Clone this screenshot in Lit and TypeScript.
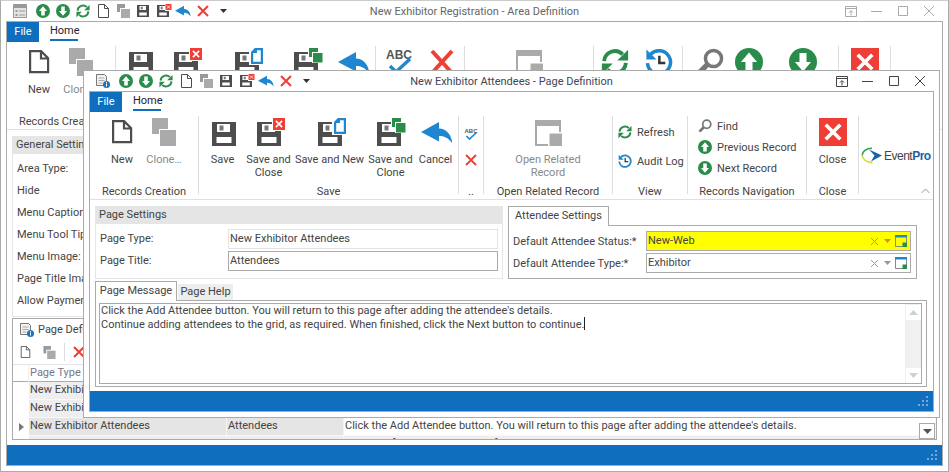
import { LitElement, html, css, svg } from "lit";
import { customElement } from "lit/decorators.js";

const GREEN = "#2a8c4a";
const BLUE = "#1f87cf";
const RED = "#ef3e36";
const DARK = "#4d4d4d";
const GREY = "#aaa";

// shapes drawn in a 16 unit box
const arrowDisc = (up: boolean) => svg`
  <circle cx="8" cy="8" r="8" fill=${GREEN}></circle>
  <path fill="#fff" d=${up ? "M8 2.6 12.6 8H10v5.2H6V8H3.4z" : "M8 13.4 12.6 8H10V2.8H6V8H3.4z"}></path>`;

const refresh = svg`
  <g fill="none" stroke=${GREEN} stroke-width="2.2">
    <path d="M1.8 7.5A6.2 6.2 0 0 1 12.4 3.6"></path>
    <path d="M14.2 8.5A6.2 6.2 0 0 1 3.6 12.4"></path>
  </g>
  <path fill=${GREEN} d="M15.5 1v6.2H9.3zM.5 15V8.8h6.2z"></path>`;

const audit = svg`
  <path fill="none" stroke=${BLUE} stroke-width="2" d="M3.2 3.6A6.6 6.6 0 1 1 1.4 8.6"></path>
  <path fill=${BLUE} d="M.8.8v5.8h5.8z"></path>
  <path fill="none" stroke="#333" stroke-width="1.4" d="M8.2 4.4v4.2h3.4"></path>`;

const find = svg`
  <circle cx="10" cy="6" r="4.6" fill="none" stroke="#777" stroke-width="2"></circle>
  <path stroke="#777" stroke-width="3" d="M6.6 9.4 1.6 14.4"></path>`;

const logoMark = svg`
  <path fill="#1b5fa8" d="M8 2.5 21 8.5 10 14.5 13.5 8.5z"></path>
  <path fill="none" stroke="#2f9e58" stroke-width="1.6" d="M11 1.2C5 1.2 1.2 4.6 1.2 8.2"></path>
  <path fill="none" stroke="#d9d92e" stroke-width="1.6" d="M1.2 8.2C1.6 12.4 5.6 15.4 11.5 15.6"></path>`;

const floppy = (x: number) => svg`
  <g transform="translate(${x} 6)">
    <path fill=${DARK} d="M0 0h24v24H0z"></path>
    <path fill="#fff" d="M5 2h13v8H5zM4.5 15h15v6h-15z"></path>
    <path fill="#777" d="M7.5 3.500h4v5h-4z"></path>
  </g>`;

const clonePair = (x: number, y: number, s: number, c: string) => svg`
  <rect x=${x} y=${y} width=${s} height=${s} fill=${c}></rect>
  <rect x=${x + s / 2 - 1} y=${y + s * 0.75 - 1} width=${s + 1} height=${s + 1} fill="#fff"></rect>
  <rect x=${x + s / 2} y=${y + s * 0.75} width=${s} height=${s} fill=${c}></rect>`;

const redBox = (x: number, y: number, s: number) => svg`
  <rect x=${x} y=${y} width=${s} height=${s} fill=${RED}></rect>
  <path fill="none" stroke="#fff" stroke-width=${s * 0.13}
    d="M${x + s * 0.24} ${y + s * 0.24}L${x + s * 0.76} ${y + s * 0.76}M${x + s * 0.76} ${y + s * 0.24}L${x + s * 0.24} ${y + s * 0.76}"></path>`;

const blueDoc = svg`
  <path fill="#fff" d="M18 0h15v19H18z"></path>
  <path fill="#fff" stroke=${BLUE} stroke-width="2.200" d="M24.500 3.100h6.400v13.800H21.100V6.500z"></path>
  <path fill=${BLUE} d="M20 7h6V2h-2z"></path>`;

// the 32 unit ribbon pictures
const bigIcons: Record<string, unknown> = {
  new: svg`<path fill="#fff" stroke=${DARK} stroke-width="2.2" d="M7.100 5.100h11l7 7v14h-18zM18 5.100v7.400h7.200"></path>`,
  clone: clonePair(4, 2, 16, GREY),
  save: floppy(5),
  saveClose: svg`${floppy(4)}<rect x="19" y="1" width="14" height="14" fill="#fff"></rect>${redBox(20, 2, 12)}`,
  saveNew: svg`${floppy(4)}${blueDoc}`,
  saveClone: svg`${floppy(2)}
    <rect x="16" y="1" width="11" height="11" fill="#fff"></rect>
    <rect x="17" y="2" width="9" height="9" fill=${GREEN}></rect>
    <rect x="20" y="6" width="11" height="11" fill="#fff"></rect>
    <rect x="21" y="7" width="9.5" height="9.5" fill=${GREEN}></rect>`,
  cancel: svg`<path fill=${BLUE} d="M1 16 19 6v6.4C27 12.6 31.4 19 32.4 27.4 28 21.6 24 20 19 20v5.6z"></path>`,
  spell: svg`
    <text x="16" y="13" text-anchor="middle" font-family="Liberation Sans" font-weight="700" font-size="12" fill="#555">ABC</text>
    <path fill="none" stroke=${BLUE} stroke-width="3.4" d="M7 20l6 6L27 13"></path>`,
  cross: svg`<path fill="none" stroke=${RED} stroke-width="4" d="M6 5l20 22M26 5 6 27"></path>`,
  related: svg`
    <path fill="none" stroke=${GREY} stroke-width="2" d="M4 5h24v24H4z"></path>
    <path fill=${GREY} d="M3 4h26v6H3z"></path>
    <path fill="#fff" d="M16 16h15v15H16z"></path>
    <path fill=${GREY} d="M17.5 17.5H30V30H17.5z"></path>`,
  close: redBox(2, 2, 28),
  refresh: svg`<g transform="translate(2 2) scale(1.75)">${refresh}</g>`,
  audit: svg`<g transform="translate(2 2) scale(1.75)">${audit}</g>`,
  find: svg`<g transform="translate(2 2) scale(1.75)">${find}</g>`,
  up: svg`<g transform="translate(2 2) scale(1.75)">${arrowDisc(true)}</g>`,
  down: svg`<g transform="translate(2 2) scale(1.75)">${arrowDisc(false)}</g>`,
};

const big = (name: string) =>
  html`<svg class="big" width="32" height="32" viewBox="0 0 32 32">${bigIcons[name]}</svg>`;

const small16 = (shape: unknown, size = 14) =>
  html`<svg width=${size} height=${size} viewBox="0 0 16 16">${shape}</svg>`;

const lookup = html`<svg width="12" height="12" viewBox="0 0 12 12">
  <path fill="none" stroke="#888" d="M.5.5h11v11H.5z"></path>
  <path fill=${BLUE} d="M0 0h12v2.500H0z"></path>
  <path fill=${GREEN} d="M7.500 7.500H12V12H7.500z"></path>
</svg>`;

const grip = html`<svg class="grip" width="12" height="12" viewBox="0 0 12 12" fill="#7ea6d2">
  <path d="M9 1h2v2H9zM5 5h2v2H5zM9 5h2v2H9zM1 9h2v2H1zM5 9h2v2H5zM9 9h2v2H9z"></path>
</svg>`;

const quickIcons = html`
  <div class="qat">
    ${small16(arrowDisc(true))}${small16(arrowDisc(false))}${small16(refresh)}
    <svg class="q-new" width="11" height="14" viewBox="0 0 11 14">
      <path fill="#fff" stroke=${DARK} d="M.5.5h6l4 4v9H.5zM6.5.5v4h4"></path>
    </svg>
    <svg class="q-clone" width="13" height="14" viewBox="0 0 13 14">
      <path fill="#999" d="M0 0h8v8H0z"></path><path fill="#fff" d="M3 4h10v10H3z"></path><path fill=${GREY} d="M4 5h9v9H4z"></path>
    </svg>
    <svg class="q-save" width="12" height="12" viewBox="0 6 24 24">${floppy(0)}</svg>
    <svg class="q-sc" width="15" height="14" viewBox="0 4 30 28">
      ${floppy(0)}<rect x="16" y="4" width="14" height="14" fill="#fff"></rect>${redBox(17, 4, 12)}
    </svg>
    <svg class="q-cancel" width="16" height="12" viewBox="1 5 32 23">${bigIcons.cancel}</svg>
    <svg class="q-x" width="12" height="12" viewBox="0 0 12 12">
      <path fill="none" stroke=${RED} stroke-width="2" d="M1 1l10 10M11 1 1 11"></path>
    </svg>
    <svg class="q-drop" width="7" height="6" viewBox="0 0 7 6"><path fill="#333" d="M0 1h7L3.500 5z"></path></svg>
  </div>`;

const appIconArea = html`<svg class="app-icon" width="14" height="14" viewBox="0 0 14 14">
  <path fill="#e4e4e4" stroke="#999" d="M.5.5h13v13H.5z"></path>
  <path fill="#999" d="M1 1h12v3H1zM2.500 6h2v2h-2zM2.500 10h2v2h-2z"></path>
  <path stroke="#999" d="M6 7h6M6 11h6"></path>
</svg>`;

const appIconPage = html`<svg class="app-icon" width="14" height="14" viewBox="0 0 14 14">
  <path fill="#f2f2f2" stroke="#777" d="M.5.5h8l2 2v9H.5z"></path>
  <path stroke="#aaa" d="M2.500 4h6M2.500 6.500h6M2.500 9h4"></path>
  <circle cx="10.500" cy="10.500" r="3.500" fill="#1b75bc"></circle>
  <path stroke="#fff" d="M10.500 9.500v3M10.500 8v1"></path>
</svg>`;

interface Btn { w: number; icon: string; label: string; dim?: boolean }
interface Group { w?: number; pad?: number; label: string; items?: Btn[]; body?: unknown }

const recordsGroup: Group = {
  w: 109, pad: 8, label: "Records Creation",
  items: [
    { w: 48, icon: "new", label: "New" },
    { w: 36, icon: "clone", label: "Clone…", dim: true },
  ],
};
const saveGroup: Group = {
  w: 260, label: "Save",
  items: [
    { w: 44, icon: "save", label: "Save" },
    { w: 48, icon: "saveClose", label: "Save and Close" },
    { w: 74, icon: "saveNew", label: "Save and New" },
    { w: 48, icon: "saveClone", label: "Save and Clone" },
    { w: 42, icon: "cancel", label: "Cancel" },
  ],
};
const relatedItems: Btn[] = [{ w: 80, icon: "related", label: "Open Related Record", dim: true }];
const closeItems: Btn[] = [{ w: 44, icon: "close", label: "Close" }];

const logo = html`<div class="logo">
  <svg width="22" height="17" viewBox="0 0 22 17">${logoMark}</svg>
  <span class="logo-t">Event<b>Pro</b></span>
</div>`;

const row = (icon: unknown, text: string) => html`<div class="srow">${icon}<span>${text}</span></div>`;

const innerGroups: Group[] = [
  recordsGroup,
  saveGroup,
  {
    w: 25, label: "..",
    body: html`<div class="stack two center">
      <svg width="16" height="14" viewBox="0 0 32 28">${bigIcons.spell}</svg>
      <svg width="12" height="12" viewBox="0 0 12 12"><path fill="none" stroke=${RED} stroke-width="1.800" d="M1 1l10 10M11 1 1 11"></path></svg>
    </div>`,
  },
  { w: 129, label: "Open Related Record", items: relatedItems },
  {
    w: 75, label: "View",
    body: html`<div class="stack two pl5">
      ${row(small16(refresh), "Refresh")}${row(small16(audit), "Audit Log")}
    </div>`,
  },
  {
    w: 119, label: "Records Navigation",
    body: html`<div class="stack three pl10">
      ${row(small16(find), "Find")}
      ${row(small16(arrowDisc(true)), "Previous Record")}
      ${row(small16(arrowDisc(false)), "Next Record")}
    </div>`,
  },
  { w: 52, label: "Close", items: closeItems },
];

const outerGroups: Group[] = [
  recordsGroup,
  saveGroup,
  {
    w: 89, label: "Spelling",
    items: [
      { w: 44, icon: "spell", label: "Spelling" },
      { w: 42, icon: "cross", label: "Clear" },
    ],
  },
  { w: 129, label: "Open Related Record", items: relatedItems },
  {
    w: 89, label: "View",
    items: [
      { w: 42, icon: "refresh", label: "Refresh" },
      { w: 46, icon: "audit", label: "Audit Log" },
    ],
  },
  {
    w: 156, pad: 7, label: "Records Navigation",
    items: [
      { w: 40, icon: "find", label: "Find" },
      { w: 38, icon: "up", label: "Previous" },
      { w: 70, icon: "down", label: "Next Record" },
    ],
  },
  { w: 52, label: "Close", items: closeItems },
];

const renderGroup = (g: Group) => html`
  <div class="group ${g.pad ? "padded" : ""}" style="width:${g.w}px;padding-left:${g.pad ?? 0}px">
    <div class="gitems">
      ${g.body ??
      (g.items ?? []).map(
        (b) => html`<div class="bigbtn ${b.dim ? "dim" : ""}" style="width:${b.w}px">
          ${big(b.icon)}<span>${b.label}</span>
        </div>`
      )}
    </div>
    <div class="glabel ${g.pad ? "shift" : ""}">${g.label}</div>
  </div>`;

const chrome = (title: string, active: boolean, icon: unknown) => html`
  <div class="title ${active ? "on" : ""}">
    ${icon}${quickIcons}
    <div class="caption">${title}</div>
    <div class="wbtns">
      <svg width="16" height="16" viewBox="0 0 16 16" fill="none" stroke="currentColor">
        <path d="M2.500 3.500h11v10h-11zM2.500 5.500h11M8 12.500V8M6 9.500l2-2 2 2"></path>
      </svg>
      <svg width="16" height="16" viewBox="0 0 16 16" fill="none" stroke="currentColor"><path d="M2 8.500h11"></path></svg>
      <svg width="16" height="16" viewBox="0 0 16 16" fill="none" stroke="currentColor"><path d="M3.500 3.500h9v9h-9z"></path></svg>
      <svg width="16" height="16" viewBox="0 0 16 16" fill="none" stroke="currentColor"><path d="M3 3l10 10M13 3 3 13"></path></svg>
    </div>
  </div>`;

const tabs = html`<div class="tabs"><div class="file">File</div><div class="home">Home</div></div>`;

@customElement("app-root")
export class AppRoot extends LitElement {
  static styles = css`
    :host {
      display: block;
      position: relative;
      width: 949px;
      height: 472px;
      overflow: hidden;
      background: #fff;
      font-family: Roboto, sans-serif;
      font-size: 11px;
      color: #444;
    }
    * { box-sizing: border-box; }
    svg { display: block; flex: none; }

    .win {
      position: absolute;
      display: flex;
      flex-direction: column;
      background: #fff;
      border: 1px solid #aaa;
      padding: 0 5px 5px;
    }
    .outer { left: 0; top: 0; width: 949px; height: 472px; border-top-color: #ccc; }
    .inner { left: 83px; top: 70px; width: 857px; height: 348px; }

    .title {
      position: relative;
      height: 20px;
      flex: none;
      display: flex;
      align-items: center;
      color: #aaa;
    }
    .title.on { color: #444; }
    .app-icon { margin-left: 7px; }
    .caption {
      position: absolute;
      left: 0;
      right: 0;
      text-align: center;
      color: #666;
    }
    .on .caption { color: #445; }
    .wbtns {
      margin-left: auto;
      display: flex;
      gap: 10px;
      margin-right: 6px;
      position: relative;
    }
    .qat { display: flex; align-items: center; margin-left: 9px; position: relative; z-index: 1; }
    .qat > svg { margin-right: 6px; }
    .qat .q-new { margin-left: 2px; margin-right: 8px; }
    .qat .q-clone { margin-right: 7px; }
    .qat .q-save { margin-right: 8px; }
    .qat .q-sc { margin-right: 3px; }
    .qat .q-cancel { margin-right: 6px; }
    .qat .q-x { margin-right: 11px; }

    .frame {
      flex: 1;
      min-height: 0;
      display: flex;
      flex-direction: column;
      border: 1px solid #aaa;
    }
    .tabs { height: 20px; flex: none; display: flex; }
    .file {
      width: 32px;
      background: #0f6ebe;
      color: #fff;
      text-align: center;
      line-height: 20px;
    }
    .home {
      margin-left: 11px;
      height: 19px;
      line-height: 18px;
      width: 28px;
      text-align: center;
      color: #223;
      border-bottom: 2px solid #0f6ebe;
    }

    .ribbon {
      flex: none;
      height: 88px;
      padding-top: 4px;
      display: flex;
      border-bottom: 1px solid #e0e0e0;
    }
    .group {
      height: 78px;
      flex: none;
      display: flex;
      flex-direction: column;
      border-right: 1px solid #ddd;
    }
    .group.last { flex: 1; position: relative; border-right: 0; }
    .gitems { height: 68px; display: flex; justify-content: center; flex: none; }
    .group.padded .gitems { justify-content: flex-start; }
    .glabel { height: 10px; line-height: 16px; text-align: center; white-space: nowrap; }
    .glabel.shift { margin-left: -8px; }
    .bigbtn {
      flex: none;
      display: flex;
      flex-direction: column;
      align-items: center;
      text-align: center;
      line-height: 13px;
    }
    .bigbtn .big { margin-bottom: 5px; }
    .dim { color: #888; }

    .stack { display: flex; flex-direction: column; width: 100%; }
    .stack.two { padding-top: 5px; gap: 7px; }
    .stack.three { gap: 1px; }
    .stack.center { align-items: center; padding-top: 10px; gap: 14px; }
    .pl5 { padding-left: 5px; }
    .pl10 { padding-left: 10px; }
    .srow { height: 20px; display: flex; align-items: center; gap: 5px; white-space: nowrap; }
    .stack.two .srow { height: 22px; }

    .logo {
      display: flex;
      align-items: center;
      gap: 1px;
      margin: 31px 0 0 2px;
    }
    .logo-t { font-family: "Liberation Sans", sans-serif; font-size: 12px; letter-spacing: -0.5px; color: #444; }
    .logo-t b { color: #1b5fa8; }
    .collapse { position: absolute; right: 3px; bottom: 0; }

    .body { flex: 1; min-height: 0; display: flex; flex-direction: column; padding: 6px 5px 0; }
    .top { display: flex; gap: 5px; height: 73px; flex: none; }
    .settings { width: 408px; border: 1px solid #e5e5e5; }
    .ghead { height: 18px; background: #e5e5e5; line-height: 17px; padding-left: 4px; margin: -1px -1px 0; }
    .frow { display: flex; align-items: center; }
    .settings .frow { padding-left: 4px; height: 20px; margin-top: 2px; }
    .settings .ghead + .frow { margin-top: 5px; }
    .settings label { width: 128px; margin-top: -2px; }
    .input {
      height: 20px;
      border: 1px solid #aaa;
      line-height: 18px;
      padding-left: 1px;
      display: flex;
      align-items: center;
    }
    .settings .input { width: 270px; }
    .input.light { border-color: #e3e3e3; }
    .attendee { width: 409px; display: flex; flex-direction: column; }
    .tab-on {
      border: 1px solid #aaa;
      border-bottom: 0;
      background: #fff;
      height: 20px;
      line-height: 18px;
      position: relative;
      z-index: 1;
      text-align: center;
    }
    .att-tab { width: 101px; }
    .att-panel {
      margin-top: -1px;
      flex: 1;
      border: 1px solid #aaa;
      padding: 5px 4px 0;
      display: flex;
      flex-direction: column;
      gap: 2px;
    }
    .att-panel label { width: 133px; white-space: nowrap; }
    .att-panel .input { width: 265px; }
    .yellow { background: #ff0; }
    .input .txt { flex: 1; }
    .input .xx { margin-right: 5px; }
    .input .dd { margin-right: 4px; }
    .input .lk { margin-right: 3px; }

    .msgtabs { display: flex; height: 20px; margin-top: 2px; align-items: flex-end; flex: none; }
    .tab-msg { width: 82px; }
    .tab-off {
      width: 55px;
      height: 17px;
      line-height: 16px;
      background: #eee;
      text-align: center;
      margin-left: 1px;
    }
    .msgpanel {
      margin-top: -1px;
      height: 87px;
      width: 832px;
      border: 1px solid #aaa;
      padding: 2px 4px 2px 3px;
      flex: none;
    }
    .msgbox {
      height: 100%;
      border: 1px solid #aaa;
      display: flex;
      position: relative;
    }
    .msgtext { flex: 1; padding: 0 0 0 1px; line-height: 13px; }
    .caret { display: inline-block; width: 1px; height: 13px; background: #222; vertical-align: -2px; }
    .scroll {
      width: 16px;
      background: #f0f0f0;
      display: flex;
      flex-direction: column;
      justify-content: space-between;
      padding: 1px 0 0 1px;
    }
    .sbtn {
      width: 15px;
      height: 15px;
      background: #fff;
      display: flex;
      align-items: center;
      justify-content: center;
    }

    .status {
      margin-top: auto;
      height: 20px;
      flex: none;
      background: #0f6ebe;
      display: flex;
      justify-content: flex-end;
      align-items: center;
      padding-right: 4px;
    }

    .outer-body { flex: 1; min-height: 0; display: flex; flex-direction: column; padding: 6px 5px 5px; }
    .general { height: 181px; flex: none; border: 1px solid #e5e5e5; }
    .grow { height: 22px; line-height: 21px; padding-left: 4px; }
    .gap10 { height: 4px; }
    .defs { flex: 1; min-height: 0; margin-top: 1px; border: 1px solid #aaa; overflow: hidden; position: relative; }
    .defs-title { height: 21px; display: flex; align-items: center; gap: 4px; padding-left: 7px; }
    .defs-title .app-icon { margin-left: 0; }
    .defs-tools { height: 25px; display: flex; align-items: center; padding-left: 7px; border-bottom: 1px solid #e6e6e6; }
    .defs-tools .sep { width: 1px; height: 18px; background: #ddd; margin: 0 8px; }
    .defs-tools .tclone { margin-left: 12px; }
    .grid { display: grid; grid-template-columns: 16px 198px 117px 1fr; grid-auto-rows: 18px; line-height: 15px; background: #eee; }
    .grid > div { white-space: nowrap; overflow: hidden; padding-left: 1px; border-bottom: 1px solid #f8f8f8; border-right: 1px solid #f4f4f4; }
    .grid.head { grid-auto-rows: 17px; background: #fff; border-bottom: 1px solid #aaa; height: 17px; }
    .grid.head > div { color: #778; border: 0; border-right: 1px solid #eee; }
    .grid .ind { background: #fff; display: flex; align-items: center; justify-content: center; border: 0; }
    .grid .sel { background: #e5e5e5; }
    .grid .white { background: #fff; }
    .dropbtn {
      position: absolute;
      right: 1px;
      top: 104px;
      width: 16px;
      height: 16px;
      background: #fff;
      border: 1px solid #aaa;
      display: flex;
      align-items: center;
      justify-content: center;
    }
  `;

  renderRibbon(groups: Group[], withLogo: boolean) {
    return html`<div class="ribbon">
      ${groups.map(renderGroup)}
      <div class="group last">
        ${withLogo ? logo : ""}
        <svg class="collapse" width="9" height="6" viewBox="0 0 9 6"><path fill="none" stroke="#999" d="M.5 5 4.500 1l4 4"></path></svg>
      </div>
    </div>`;
  }

  renderOuter() {
    const fields = ["Area Type:", "Hide", "Menu Caption:", "Menu Tool Tip:", "Menu Image:", "Page Title Image:", "Allow Payment:"];
    const rows = [
      ["New Exhibitor Registration", "Registration", ""],
      ["New Exhibitor Contact", "Contact", ""],
    ];
    return html`<div class="win outer">
      ${chrome("New Exhibitor Registration - Area Definition", false, appIconArea)}
      <div class="frame">
        ${tabs}${this.renderRibbon(outerGroups, false)}
        <div class="outer-body">
          <div class="general">
            <div class="ghead">General Settings</div>
            <div class="gap10"></div>
            ${fields.map((f) => html`<div class="grow">${f}</div>`)}
          </div>
          <div class="defs">
            <div class="defs-title">
              ${appIconPage}
              <span>Page Definitions</span>
            </div>
            <div class="defs-tools">
              <svg width="11" height="12" viewBox="0 0 11 14"><path fill="#fff" stroke=${DARK} d="M.5.5h6l4 4v9H.5zM6.500.5v4h4"></path></svg>
              <svg class="tclone" width="13" height="13" viewBox="0 0 13 14">
                <path fill="#999" d="M0 0h8v8H0z"></path><path fill="#fff" d="M3 4h10v10H3z"></path><path fill=${GREY} d="M4 5h9v9H4z"></path>
              </svg>
              <div class="sep"></div>
              <svg width="12" height="12" viewBox="0 0 12 12"><path fill="none" stroke=${RED} stroke-width="2" d="M1 1l10 10M11 1 1 11"></path></svg>
            </div>
            <div class="grid head">
              <div></div><div>Page Type</div><div>Page Title</div><div>Page Message</div>
            </div>
            <div class="grid">
              ${rows.map((r) => html`<div class="ind"></div>${r.map((c) => html`<div>${c}</div>`)}`)}
              <div class="ind"><svg width="5" height="8" viewBox="0 0 5 8"><path fill="#777" d="M0 0l5 4-5 4z"></path></svg></div>
              <div class="sel">New Exhibitor Attendees</div>
              <div class="sel">Attendees</div>
              <div class="white">Click the Add Attendee button. You will return to this page after adding the attendee's details.</div>
              <div class="ind"></div>
              <div>New Exhibitor Attendee Details</div>
              <div>Attendee Details</div>
              <div>Enter the following attendee information, and then click the Submit Attendee button.</div>
            </div>
            <div class="dropbtn"><svg width="9" height="5" viewBox="0 0 9 5"><path fill="#555" d="M0 0h9L4.500 5z"></path></svg></div>
          </div>
        </div>
        <div class="status">${grip}</div>
      </div>
    </div>`;
  }

  renderInner() {
    const tools = html`
      <svg class="xx" width="9" height="9" viewBox="0 0 9 9"><path fill="none" stroke="#999" d="M1 1l7 7M8 1 1 8"></path></svg>
      <svg class="dd" width="7" height="4" viewBox="0 0 7 4"><path fill="#999" d="M0 0h7L3.500 4z"></path></svg>
      <span class="lk">${lookup}</span>`;
    const toolsY = html`
      <svg class="xx" width="9" height="9" viewBox="0 0 9 9"><path fill="none" stroke="#d98a2a" d="M1 1l7 7M8 1 1 8"></path></svg>
      <svg class="dd" width="7" height="4" viewBox="0 0 7 4"><path fill="#d98a2a" d="M0 0h7L3.500 4z"></path></svg>
      <span class="lk">${lookup}</span>`;
    return html`<div class="win inner">
      ${chrome("New Exhibitor Attendees - Page Definition", true, appIconPage)}
      <div class="frame">
        ${tabs}${this.renderRibbon(innerGroups, true)}
        <div class="body">
          <div class="top">
            <div class="settings">
              <div class="ghead">Page Settings</div>
              <div class="frow"><label>Page Type:</label><div class="input light">New Exhibitor Attendees</div></div>
              <div class="frow"><label>Page Title:</label><div class="input">Attendees</div></div>
            </div>
            <div class="attendee">
              <div class="tab-on att-tab">Attendee Settings</div>
              <div class="att-panel">
                <div class="frow">
                  <label>Default Attendee Status:*</label>
                  <div class="input yellow"><span class="txt">New-Web</span>${toolsY}</div>
                </div>
                <div class="frow">
                  <label>Default Attendee Type:*</label>
                  <div class="input"><span class="txt">Exhibitor</span>${tools}</div>
                </div>
              </div>
            </div>
          </div>
          <div class="msgtabs">
            <div class="tab-on tab-msg">Page Message</div>
            <div class="tab-off">Page Help</div>
          </div>
          <div class="msgpanel">
            <div class="msgbox">
              <div class="msgtext">
                Click the Add Attendee button. You will return to this page after adding the attendee's details.<br />
                Continue adding attendees to the grid, as required. When finished, click the Next button to continue.<span class="caret"></span>
              </div>
              <div class="scroll">
                <div class="sbtn"><svg width="9" height="5" viewBox="0 0 9 5"><path fill="#c5d5cd" d="M0 5h9L4.500 0z"></path></svg></div>
                <div class="sbtn"><svg width="9" height="5" viewBox="0 0 9 5"><path fill="#c5d5cd" d="M0 0h9L4.500 5z"></path></svg></div>
              </div>
            </div>
          </div>
        </div>
        <div class="status">${grip}</div>
      </div>
    </div>`;
  }

  render() {
    return html`${this.renderOuter()}${this.renderInner()}`;
  }
}
